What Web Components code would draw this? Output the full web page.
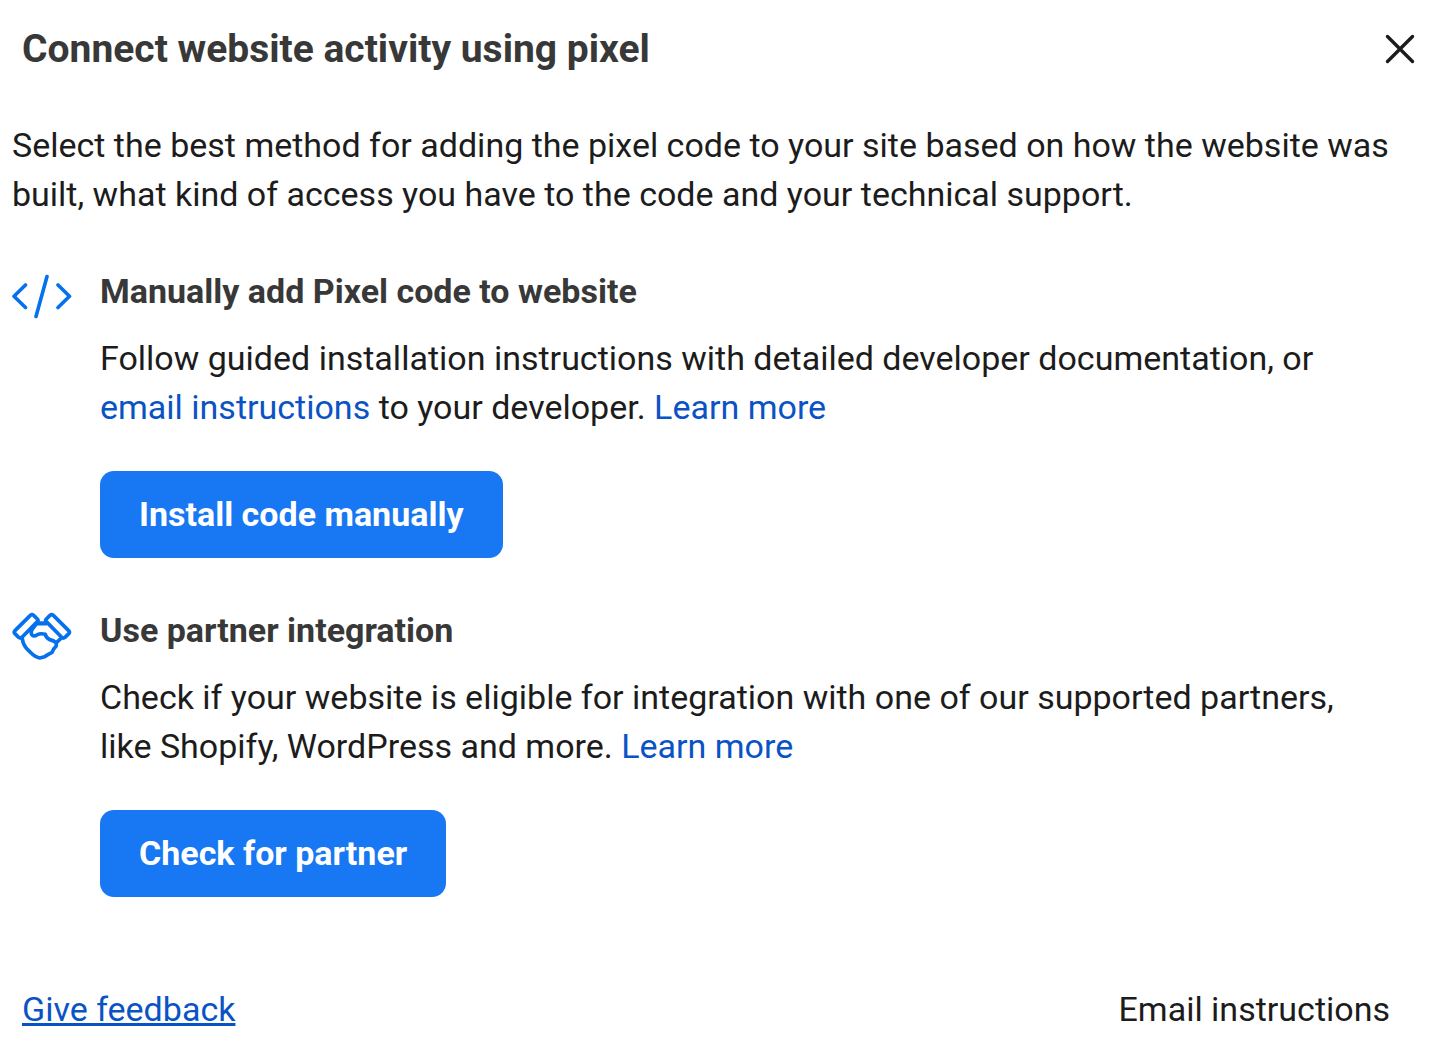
<!DOCTYPE html>
<html lang="en">
<head>
<meta charset="utf-8">
<title>Connect website activity using pixel</title>
<style>
body { margin: 0; background: #fff; font-family: Roboto, "Liberation Sans", sans-serif; color: #1c1c1c; }
a { color: #0a53c5; text-decoration: none; }
</style>
</head>
<body>
<pixel-dialog>
  <span slot="title">Connect website activity using pixel</span>
  <span slot="intro">Select the best method for adding the pixel code to your site based on how the website was built, what kind of access you have to the code and your technical support.</span>
  <method-option action="Install code manually">
    <code-icon slot="icon"></code-icon>
    <span slot="heading">Manually add Pixel code to website</span>
    Follow guided installation instructions with detailed developer documentation, or <a href="#email">email instructions</a> to your developer. <a href="#learn-pixel">Learn more</a>
  </method-option>
  <method-option action="Check for partner">
    <handshake-icon slot="icon"></handshake-icon>
    <span slot="heading">Use partner integration</span>
    Check if your website is eligible for integration with one of our supported partners, like Shopify, WordPress and more. <a href="#learn-partner">Learn more</a>
  </method-option>
</pixel-dialog>
<script>
class BaseElement extends HTMLElement {
  constructor() {
    super();
    this.attachShadow({ mode: 'open' }).innerHTML = this.constructor.markup;
  }
}

class CodeIcon extends BaseElement {
  static markup = `
    <style>:host { display: block; } svg { display: block; }</style>
    <svg width="60" height="60" viewBox="0 0 60 60" fill="none" stroke="#0571ed" stroke-width="3.6" stroke-linecap="round" stroke-linejoin="round" aria-hidden="true">
      <path d="M13.5 18 2 29.2 13.5 40.5M46 18l11.5 11.2L46 40.5M35 9.5 24 49.5"/>
    </svg>`;
}

class HandshakeIcon extends BaseElement {
  static markup = `
    <style>:host { display: block; } svg { display: block; }</style>
    <svg width="60" height="60" viewBox="36 18 180 180" fill="none" stroke="#0571ed" stroke-width="11" stroke-linecap="round" stroke-linejoin="round" aria-hidden="true">
      <path d="M91 46Q96 42 101 46L112 57Q116 61 112 65L66 112Q61 116 56 112L44 100Q41 96 45 92Z"/>
      <path d="M160 46Q155 42 150 46L139 57Q135 61 139 65L185 112Q190 116 195 112L207 100Q210 96 206 92Z"/>
      <path d="M113 70H138" stroke-width="13"/>
      <path d="M109 72 96 89Q91 98 96 105Q102 111 112 104Q122 99 136 103Q138 113 149 119Q159 121 167 127"/>
      <path d="M67 116C69 132 74 141 86 152C98 164 104 172 119 174L134 170L145 163L156 157L161 147L168 139L170 127L184 114"/>
    </svg>`;
}

class MethodOption extends BaseElement {
  static markup = `
    <style>
      :host { display: grid; grid-template-columns: 60px 1fr; column-gap: 28px; padding-right: 36px; }
      h2 { margin: 0 0 19px; font-size: 34px; line-height: 48px; font-weight: 700; color: #383838; }
      p { margin: 0 0 39px; }
      button { border: 0; border-radius: 14px; padding: 0 39px 2px; height: 87px; background: #1877f2; color: #fff; font: 700 34px/48px Roboto, sans-serif; cursor: pointer; }
    </style>
    <slot name="icon"></slot>
    <div>
      <h2><slot name="heading"></slot></h2>
      <p><slot></slot></p>
      <button type="button"></button>
    </div>`;
  connectedCallback() {
    this.shadowRoot.querySelector('button').textContent = this.getAttribute('action');
  }
}

class PixelDialog extends BaseElement {
  static markup = `
    <style>
      :host { display: block; font-size: 34px; line-height: 49px; }
      header { display: flex; justify-content: space-between; align-items: center; padding: 20px 38px 20px 22px; }
      h1 { margin: 0; font-size: 39px; line-height: 58px; font-weight: 700; color: #383838; }
      header button { display: flex; border: 0; padding: 0; background: none; cursor: pointer; }
      main { display: grid; gap: 48px; padding: 23px 36px 0 12px; }
      main p { margin: 0; }
      footer { display: flex; justify-content: space-between; align-items: center; padding: 88px 66px 20px 22px; }
      footer a { color: #0a53c5; text-decoration: underline; }
      footer button { border: 0; padding: 0; background: none; color: inherit; font: inherit; cursor: pointer; }
    </style>
    <header>
      <h1><slot name="title"></slot></h1>
      <button type="button" aria-label="Close">
        <svg width="36" height="36" viewBox="0 0 36 36" stroke="#1c1c1c" stroke-width="3.4" stroke-linecap="round"><path d="M5.5 5.5l25 25M30.5 5.5l-25 25"/></svg>
      </button>
    </header>
    <main>
      <p><slot name="intro"></slot></p>
      <slot></slot>
    </main>
    <footer>
      <a href="#feedback">Give feedback</a>
      <button type="button">Email instructions</button>
    </footer>`;
}

customElements.define('code-icon', CodeIcon);
customElements.define('handshake-icon', HandshakeIcon);
customElements.define('method-option', MethodOption);
customElements.define('pixel-dialog', PixelDialog);
</script>
</body>
</html>
